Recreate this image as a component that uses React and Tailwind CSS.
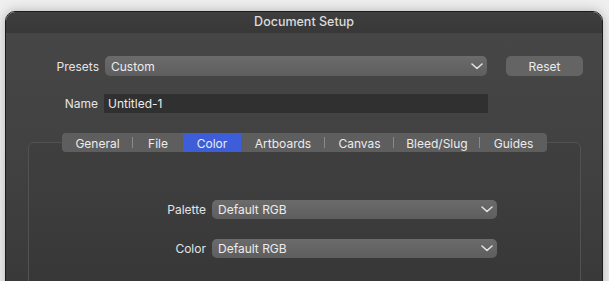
import React from 'react';

const Chevron = () => (
  <svg width="12" height="7" viewBox="0 0 12 7" fill="none" className="shrink-0">
    <path d="M1 1l5 4.5L11 1" stroke="#e2e2e2" strokeWidth="1.6" strokeLinecap="round" strokeLinejoin="round" />
  </svg>
);

const Select = ({ value, className = '' }) => (
  <div
    className={`flex items-center justify-between rounded-[5px] bg-gradient-to-b from-[#6b6b6b] to-[#5e5e5e] pl-[6px] pr-[4px] text-[12px] text-[#ececec] ${className}`}
  >
    <span className="pt-px">{value}</span>
    <Chevron />
  </div>
);

const tabs = [
  { label: 'General', w: 71 },
  { label: 'File', w: 50 },
  { label: 'Color', w: 58, active: true },
  { label: 'Artboards', w: 84 },
  { label: 'Canvas', w: 69 },
  { label: 'Bleed/Slug', w: 86 },
  { label: 'Guides', w: 67 },
];

export default function App() {
  return (
    <div
      className="w-full h-[281px] overflow-hidden bg-[#efefef] pl-[5px] pr-[6px] pt-[11px]"
      style={{ fontFamily: 'Inter, "Noto Sans", sans-serif' }}
    >
      <div className="flex h-[290px] flex-col overflow-hidden rounded-t-[10px] border border-[#1c1c1c] shadow-[0_0_12px_rgba(0,0,0,0.25)]">
        {/* Title bar */}
        <div className="flex h-[21px] shrink-0 items-center justify-center bg-gradient-to-b from-[#3e3e3e] to-[#383838] text-[12.5px] font-medium text-[#dcdcdc]">
          Document Setup
        </div>

        {/* Body */}
        <div className="flex flex-1 flex-col bg-gradient-to-b from-[#464646] via-[#414141] to-[#383838] pt-[23px]">
          {/* Presets row */}
          <div className="flex h-[20px] items-center">
            <div className="w-[94px] pr-[1px] pt-px text-right text-[12px] text-[#e4e4e4]">Presets</div>
            <Select value="Custom" className="ml-[5px] h-[20px] w-[382px]" />
            <div className="ml-[19px] flex h-[20px] w-[77px] items-center justify-center rounded-[5px] bg-[#646464] pt-px text-[12px] text-[#ececec]">
              Reset
            </div>
          </div>

          {/* Name row */}
          <div className="mt-[18px] flex h-[19px] items-center">
            <div className="w-[92px] pt-px text-right text-[12px] text-[#e4e4e4]">Name</div>
            <div className="ml-[6px] flex h-[19px] w-[384px] items-center bg-[#303030] pl-[4px] pt-px text-[12px] text-[#ececec]">
              Untitled-1
            </div>
          </div>

          {/* Tabs + group box */}
          <div className="mt-[20px] flex flex-1 flex-col">
            <div className="relative z-10 ml-[56px] flex h-[19px] w-fit overflow-hidden rounded-[4px] bg-[#5e5e5e]">
              {tabs.map((t, i) => {
                const next = tabs[i + 1];
                const showSep = next && !t.active && !next.active;
                return (
                  <div
                    key={t.label}
                    className={`relative flex items-center justify-center pt-[2px] text-[12px] text-[#ececec] ${t.active ? 'bg-[#3d5ed8]' : ''}`}
                    style={{ width: t.w }}
                  >
                    {t.label}
                    {showSep && <span className="absolute right-0 top-[4px] h-[11px] w-px bg-[#8a8a8a]" />}
                  </div>
                );
              })}
            </div>

            <div className="-mt-[10px] ml-[22px] flex w-[553px] flex-1 flex-col rounded-[6px] border border-[#525252] bg-black/[0.03] pt-[57px]">
              <div className="flex h-[19px] items-center">
                <div className="w-[177px] pt-px text-right text-[12px] text-[#e4e4e4]">Palette</div>
                <Select value="Default RGB" className="ml-[6px] h-[19px] w-[285px]" />
              </div>
              <div className="mt-[20px] flex h-[19px] items-center">
                <div className="w-[177px] pt-px text-right text-[12px] text-[#e4e4e4]">Color</div>
                <Select value="Default RGB" className="ml-[6px] h-[19px] w-[285px]" />
              </div>
            </div>
          </div>
        </div>
      </div>
    </div>
  );
}
